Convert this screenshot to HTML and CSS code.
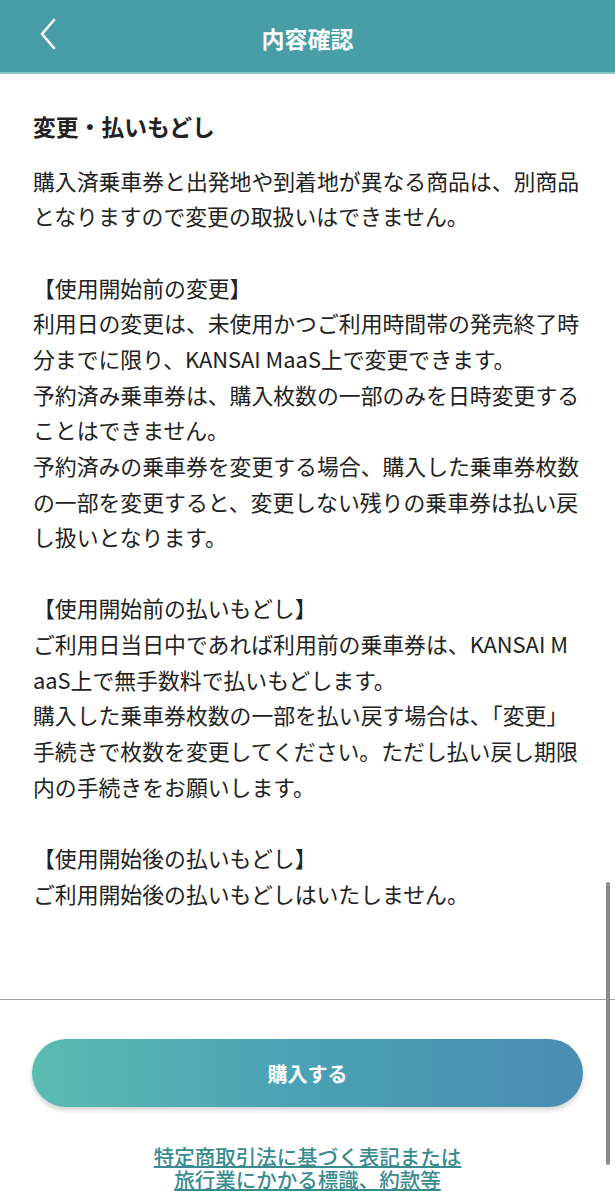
FILE: index.html
```html
<!DOCTYPE html>
<html lang="ja">
<head>
<meta charset="utf-8">
<title>内容確認</title>
<link rel="stylesheet" href="styles.css">
</head>
<body>
<div class="page">
  <header class="header">
    <button class="back" aria-label="戻る">
      <svg width="20" height="32" viewBox="0 0 20 32"><path d="M16 2 L4 16 L16 30" fill="none" stroke="#fff" stroke-width="2.6" stroke-linecap="round" stroke-linejoin="round"/></svg>
    </button>
    <h1 class="title">内容確認</h1>
  </header>
  <main class="content">
    <h2 class="heading">変更・払いもどし</h2>
    <p class="body">購入済乗車券と出発地や到着地が異なる商品は、別商品<br>となりますので変更の取扱いはできません。<br><br>【使用開始前の変更】<br>利用日の変更は、未使用かつご利用時間帯の発売終了時<br>分までに限り、KANSAI MaaS上で変更できます。<br>予約済み乗車券は、購入枚数の一部のみを日時変更する<br>ことはできません。<br>予約済みの乗車券を変更する場合、購入した乗車券枚数<br>の一部を変更すると、変更しない残りの乗車券は払い戻<br>し扱いとなります。<br><br>【使用開始前の払いもどし】<br>ご利用日当日中であれば利用前の乗車券は、KANSAI M<br>aaS上で無手数料で払いもどします。<br>購入した乗車券枚数の一部を払い戻す場合は、「変更」<br>手続きで枚数を変更してください。ただし払い戻し期限<br>内の手続きをお願いします。<br><br>【使用開始後の払いもどし】<br>ご利用開始後の払いもどしはいたしません。</p>
  </main>
  <footer class="footer">
    <button class="buy">購入する</button>
    <a class="link" href="#"><span class="link-line">特定商取引法に基づく表記または</span><span class="link-line">旅行業にかかる標識、約款等</span></a>
  </footer>
  <div class="scrollbar"></div>
</div>
</body>
</html>
```
FILE: styles.css
```css
html, body {
  margin: 0;
  padding: 0;
  background: #fff;
}
body {
  font-family: "Noto Sans CJK JP", "Noto Sans", sans-serif;
  color: #222;
}
.page {
  position: relative;
  width: 615px;
  min-height: 1200px;
  overflow: hidden;
}
.header {
  position: relative;
  height: 72px;
  background: #479ea7;
  border-bottom: 2px solid #8ac4c8;
  display: flex;
  align-items: center;
  justify-content: center;
}
.back {
  position: absolute;
  left: 38px;
  top: 18px;
  padding: 0;
  border: 0;
  background: none;
  width: 20px;
  height: 32px;
}
.title {
  margin: 0;
  font-size: 23px;
  font-weight: 700;
  color: #fff;
  line-height: 1;
  padding-top: 4px;
}
.content {
  padding: 35px 33px 0 33px;
  height: 926px;
  box-sizing: border-box;
  border-bottom: 1px solid #a3a3a3;
}
.heading {
  margin: 0 0 18px 0;
  font-size: 22.8px;
  font-weight: 700;
  line-height: 35.6px;
  color: #222;
}
.body {
  margin: 0;
  font-size: 21.85px;
  line-height: 35.65px;
  white-space: nowrap;
  color: #222;
}
.footer {
  display: flex;
  flex-direction: column;
  align-items: center;
  padding-top: 39px;
}
.buy {
  width: 551px;
  height: 68px;
  border: 0;
  border-radius: 34px;
  background: linear-gradient(90deg, #5bbcb1 0%, #4ba3b5 45%, #4a8db4 100%);
  box-shadow: 0 3px 5px rgba(0, 0, 0, 0.18);
  color: #fff;
  font-family: "Noto Sans CJK JP", "Noto Sans", sans-serif;
  font-size: 20px;
  font-weight: 700;
}
.link {
  margin-top: 38px;
  display: flex;
  flex-direction: column;
  align-items: center;
  font-size: 20.5px;
  font-weight: 500;
  color: #3a8b8f;
  text-decoration: none;
}
.link-line {
  display: block;
  height: 23px;
  line-height: 23px;
  text-decoration: underline;
  text-underline-offset: 1px;
}
.scrollbar {
  position: absolute;
  left: 606px;
  top: 882px;
  width: 4px;
  height: 283px;
  border-radius: 2px;
  background: #8a8a8a;
}
```
